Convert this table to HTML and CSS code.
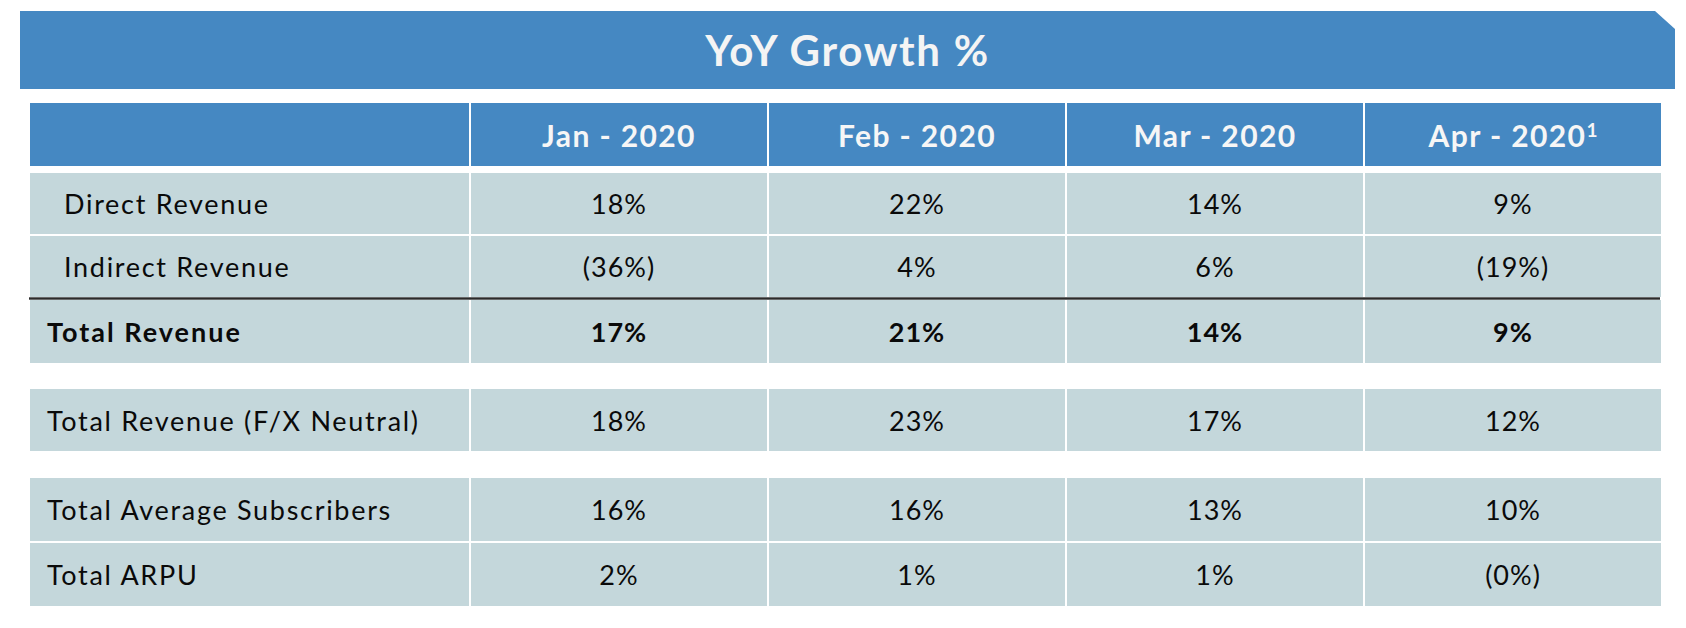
FILE: index.html
```html
<!DOCTYPE html>
<html lang="en">
<head>
<meta charset="utf-8">
<title>YoY Growth %</title>
<link rel="stylesheet" href="styles.css">
</head>
<body>
<div class="page">
  <div class="banner"><h1 class="title">YoY Growth %</h1></div>
  <div class="table">
    <div class="row head">
      <div class="cell label"></div>
      <div class="cell">Jan - 2020</div>
      <div class="cell">Feb - 2020</div>
      <div class="cell">Mar - 2020</div>
      <div class="cell">Apr - 2020<sup class="note">1</sup></div>
    </div>
    <div class="row first h61">
      <div class="cell label indent">Direct Revenue</div>
      <div class="cell">18%</div>
      <div class="cell">22%</div>
      <div class="cell">14%</div>
      <div class="cell">9%</div>
    </div>
    <div class="row gap2 h61">
      <div class="cell label indent">Indirect Revenue</div>
      <div class="cell">(36%)</div>
      <div class="cell">4%</div>
      <div class="cell">6%</div>
      <div class="cell">(19%)</div>
    </div>
    <div class="rule"></div>
    <div class="row bold">
      <div class="cell label">Total Revenue</div>
      <div class="cell">17%</div>
      <div class="cell">21%</div>
      <div class="cell">14%</div>
      <div class="cell">9%</div>
    </div>
    <div class="row sep h62">
      <div class="cell label">Total Revenue (F/X Neutral)</div>
      <div class="cell">18%</div>
      <div class="cell">23%</div>
      <div class="cell">17%</div>
      <div class="cell">12%</div>
    </div>
    <div class="row sep2">
      <div class="cell label">Total Average Subscribers</div>
      <div class="cell">16%</div>
      <div class="cell">16%</div>
      <div class="cell">13%</div>
      <div class="cell">10%</div>
    </div>
    <div class="row gap2">
      <div class="cell label">Total ARPU</div>
      <div class="cell">2%</div>
      <div class="cell">1%</div>
      <div class="cell">1%</div>
      <div class="cell">(0%)</div>
    </div>
  </div>
</div>
</body>
</html>
```
FILE: styles.css
```css
* { box-sizing: border-box; }
html, body { margin: 0; padding: 0; background: #ffffff; }
body { font-family: Lato, "Open Sans", "Liberation Sans", sans-serif; color: #0a0a0a; }

.page { padding-top: 11px; width: 1686px; }

.banner {
  margin-left: 20px;
  width: 1655px;
  height: 78px;
  background: #4588c2;
  clip-path: polygon(0 0, calc(100% - 20px) 0, 100% 18px, 100% 100%, 0 100%);
  display: flex;
  align-items: center;
  justify-content: center;
}
.title {
  margin: 0;
  font-size: 42px;
  font-weight: 700;
  color: #f4f4f4;
  letter-spacing: 1.7px;
}

.table {
  margin-left: 30px;
  margin-top: 14px;
  width: 1629px;
  display: flex;
  flex-direction: column;
}
.row {
  display: grid;
  grid-template-columns: 439px 296px 296px 296px 296px;
  column-gap: 2px;
  height: 63px;
}
.row.h61 { height: 61px; }
.row.h62 { height: 62px; }
.row.first { margin-top: 7px; }
.row.gap2 { margin-top: 2px; }
.row.sep { margin-top: 26px; }
.row.sep2 { margin-top: 27px; }

.cell {
  background: #c4d7db;
  display: flex;
  align-items: center;
  justify-content: center;
  font-size: 27px;
  letter-spacing: 1px;
  white-space: nowrap;
}
.cell.label {
  justify-content: flex-start;
  padding-left: 17px;
  letter-spacing: 1.7px;
}
.cell.label.indent { padding-left: 34px; }

.head .cell {
  background: #4588c2;
  color: #f6f6f6;
  font-weight: 700;
  font-size: 30px;
  letter-spacing: 1.4px;
}
.note {
  font-size: 19px;
  align-self: flex-start;
  margin-top: 17px;
  margin-left: 0;
  letter-spacing: 0;
  line-height: 1;
}
.bold .cell { font-weight: 700; }
.bold .cell.label { letter-spacing: 2px; }

.rule {
  height: 3px;
  margin: 0 -1px;
  background: #2b2b2b;
  border-top: 1px solid #6a6a6a;
  border-bottom: 1px solid #6a6a6a;
}
```
